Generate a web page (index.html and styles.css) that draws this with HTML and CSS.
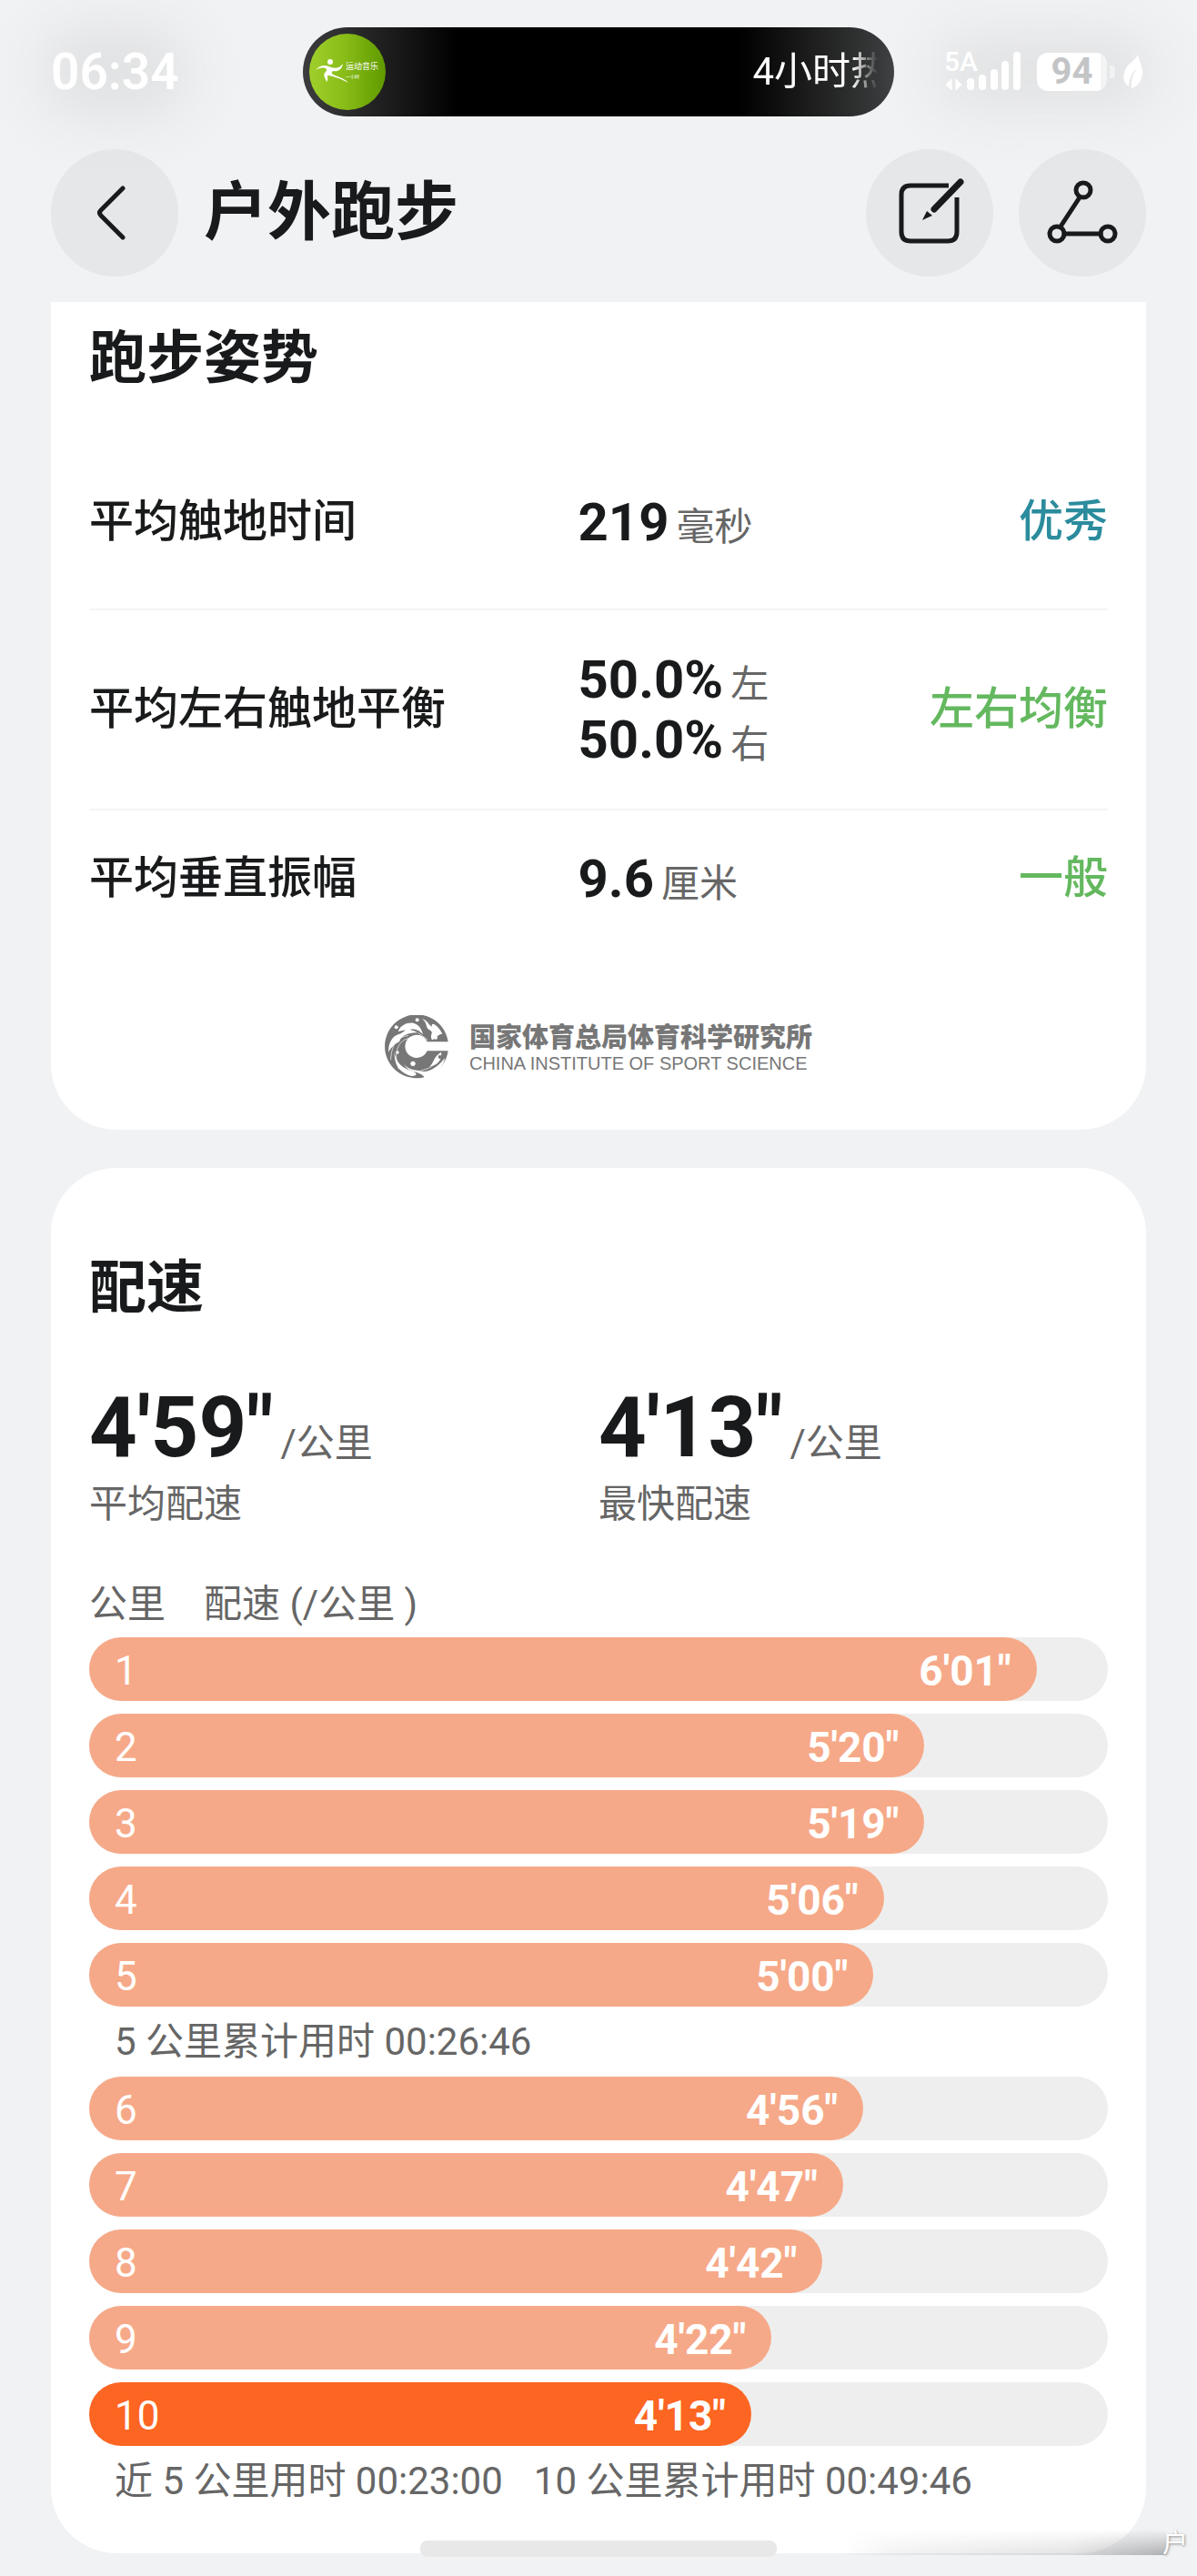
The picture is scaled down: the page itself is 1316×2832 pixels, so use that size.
FILE: index.html
```html
<!DOCTYPE html>
<html lang="zh-CN">
<head>
<meta charset="utf-8">
<meta name="viewport" content="width=device-width, initial-scale=1">
<title>户外跑步</title>
<link rel="stylesheet" href="styles.css">
</head>
<body>
<div class="page">
  <div class="statusbar">
    <time class="clock haze">06:34</time>
    <div class="island">
      <svg class="album" viewBox="0 0 84 84" aria-hidden="true">
        <defs>
          <linearGradient id="leafy" x1="0" x2="1"><stop offset="0" stop-color="#9fcf2b"/><stop offset=".45" stop-color="#8abd18"/><stop offset="1" stop-color="#5f9a00"/></linearGradient>
        </defs>
        <circle cx="42" cy="42" r="42" fill="url(#leafy)"/>
        <circle cx="23" cy="31" r="3" fill="#fff"/>
        <path d="M7 40C12 34 18 34 24 37C30 39 34 37 37 33C36 40 31 42 26 41C20 46 36 46 43 54C34 49 24 46 20 46C20 49 21 51 19 53C18 49 14 45 18 42C22 38 14 35 7 40Z" fill="#fff"/>
        <text x="40" y="39" class="album-name">运动音乐</text>
        <text x="40" y="49" class="album-sub">一小时</text>
      </svg>
      <span class="ticker">4小时热</span>
    </div>
    <div class="indicators haze">
      <div class="network">
        <span class="network-type">5A</span>
        <svg class="signal" viewBox="0 0 84 44" aria-hidden="true">
          <path d="M2 36L8 30V42ZM19 36L13 30V42Z" fill="#fff" stroke="#fff" stroke-linejoin="round"/>
          <rect x="25" y="29" width="8" height="13" rx="4" fill="#fff"/>
          <rect x="38" y="25" width="8" height="17" rx="4" fill="#fff"/>
          <rect x="51" y="19" width="8" height="23" rx="4" fill="#fff"/>
          <rect x="63" y="10" width="8" height="32" rx="4" fill="#fff"/>
          <rect x="76" y="0" width="8" height="42" rx="4" fill="#fff"/>
        </svg>
      </div>
      <span class="battery">94</span>
      <svg class="leaf" viewBox="0 0 22 38" aria-hidden="true">
        <path d="M16 0C17 8 22 13 21 21C20 31 14 36 9 37C8 28 11 21 15 15C9 20 6 27 6 35C-1 31 -1 22 3 15C6 9 13 7 16 0Z" fill="#fff"/>
      </svg>
    </div>
  </div>

  <header class="topbar">
    <button class="round-button" type="button" aria-label="返回">
      <svg viewBox="0 0 140 140"><path d="M79 43L55 67Q52 70 55 73L79 97" class="line"/></svg>
    </button>
    <h1 class="title">户外跑步</h1>
    <button class="round-button" type="button" aria-label="编辑">
      <svg viewBox="0 0 140 140">
        <path d="M91 40H49Q39 40 39 50V91Q39 101 49 101H90Q100 101 100 91V53" class="line edge"/>
        <path d="M75 66L104 36" class="pen"/>
        <path d="M62 78L67 68L73 73Z" fill="#191a1b"/>
      </svg>
    </button>
    <button class="round-button" type="button" aria-label="分享">
      <svg viewBox="0 0 140 140">
        <g class="line">
          <circle cx="71" cy="45" r="8"/><circle cx="42" cy="93" r="8"/><circle cx="98" cy="93" r="8"/>
          <path d="M67 53L46 85M50 93H90"/>
        </g>
      </svg>
    </button>
  </header>

  <main class="content">
    <section class="card form-card">
      <h2 class="heading">跑步姿势</h2>
      <table class="metrics">
        <tbody>
          <tr class="row-tall"><th scope="row">平均触地时间</th><td class="value"><div class="reading"><b>219</b><span class="unit">毫秒</span></div></td><td class="grade grade-best">优秀</td></tr>
          <tr class="row-double"><th scope="row">平均左右触地平衡</th><td class="value"><div class="reading"><b>50.0%</b><span class="unit">左</span></div><div class="reading"><b>50.0%</b><span class="unit">右</span></div></td><td class="grade">左右均衡</td></tr>
          <tr class="row-short"><th scope="row">平均垂直振幅</th><td class="value"><div class="reading"><b>9.6</b><span class="unit">厘米</span></div></td><td class="grade">一般</td></tr>
        </tbody>
      </table>
      <div class="institute">
        <svg class="emblem" viewBox="40 30 210 210" aria-hidden="true">
          <path d="M249 118A105 105 0 1 0 249 148H180A38 38 0 1 1 180 118Z" fill="#777"/>
          <g fill="#fff">
            <path d="M52 152C52 120 66 98 86 93C105 88 112 72 124 67C118 84 135 78 148 88C118 86 98 98 90 112C92 122 74 116 52 152Z"/>
            <path d="M84 84C92 64 112 54 134 56C152 60 162 76 166 94C150 76 140 70 84 84Z"/>
            <path d="M163 42C186 50 182 62 196 68C190 50 216 62 230 92C216 92 208 108 196 112C186 92 206 88 186 78C174 72 182 56 163 42Z"/>
            <path d="M72 150C75 186 98 206 134 216C156 226 136 236 118 228C86 216 70 190 72 150Z"/>
            <path d="M98 176C104 204 124 210 158 214C180 222 212 206 238 172C238 192 204 236 172 236C150 206 112 230 98 176Z"/>
            <path d="M188 200C204 184 200 168 226 152C230 176 216 194 188 200Z"/>
            <circle cx="78" cy="70" r="6"/><circle cx="147" cy="46" r="6"/><circle cx="208" cy="104" r="6"/><circle cx="82" cy="153" r="5"/><circle cx="133" cy="190" r="8"/>
          </g>
          <g fill="none" stroke="#fff" stroke-width="2">
            <path d="M60 178C62 124 84 100 118 98M86 208C66 150 86 112 122 106M150 88L182 112M160 212C190 208 210 190 222 166"/>
          </g>
          <circle cx="222" cy="168" r="6" fill="#777"/>
        </svg>
        <div class="institute-name">
          <div class="institute-cn">国家体育总局体育科学研究所</div>
          <div class="institute-en">CHINA INSTITUTE OF SPORT SCIENCE</div>
        </div>
      </div>
    </section>

    <section class="card pace-card">
      <h2 class="heading">配速</h2>
      <dl class="summary">
        <div><dd class="reading pace-value"><b>4'59"</b><span class="unit">/公里</span></dd><dt>平均配速</dt></div>
        <div><dd class="reading pace-value"><b>4'13"</b><span class="unit">/公里</span></dd><dt>最快配速</dt></div>
      </dl>
      <div class="split-head"><span>公里</span><span>配速 (/公里 )</span></div>
      <ol class="splits">
        <li class="track"><div class="bar" style="width:93%"><span>1</span><b>6'01"</b></div></li>
        <li class="track"><div class="bar" style="width:82%"><span>2</span><b>5'20"</b></div></li>
        <li class="track"><div class="bar" style="width:82%"><span>3</span><b>5'19"</b></div></li>
        <li class="track"><div class="bar" style="width:78%"><span>4</span><b>5'06"</b></div></li>
        <li class="track"><div class="bar" style="width:77%"><span>5</span><b>5'00"</b></div></li>
        <li class="subtotal"><span>5 公里累计用时 00:26:46</span></li>
        <li class="track"><div class="bar" style="width:76%"><span>6</span><b>4'56"</b></div></li>
        <li class="track"><div class="bar" style="width:74%"><span>7</span><b>4'47"</b></div></li>
        <li class="track"><div class="bar" style="width:72%"><span>8</span><b>4'42"</b></div></li>
        <li class="track"><div class="bar" style="width:67%"><span>9</span><b>4'22"</b></div></li>
        <li class="track"><div class="bar bar-fastest" style="width:65%"><span>10</span><b>4'13"</b></div></li>
        <li class="subtotal"><span>近 5 公里用时 00:23:00</span><span>10 公里累计用时 00:49:46</span></li>
      </ol>
    </section>
  </main>

  <div class="home-indicator"></div>
  <div class="floating-label"><span>户</span></div>
</div>
</body>
</html>
```
FILE: styles.css
```css
* { box-sizing: border-box; }

body {
  margin: 0;
  background: #f1f2f4;
  color: #191a1b;
  font-family: Roboto, "Noto Sans CJK SC", sans-serif;
}

h1, h2, dl, dd, ol { margin: 0; padding: 0; }

.page { position: relative; padding-bottom: 24px; overflow: hidden; }

/* status bar */
.statusbar {
  display: grid;
  grid-template-columns: 1fr 650px 1fr;
  align-items: center;
  padding: 30px 56px 36px;
  color: #fff;
}
.haze { position: relative; z-index: 0; }
.haze::before {
  content: "";
  position: absolute;
  inset: -16px -8px;
  z-index: -1;
  border-radius: 40px;
  background: #e0e1e2;
  filter: blur(30px);
}
.clock { justify-self: start; font-size: 55px; line-height: 64px; font-weight: 600; }
.island {
  display: flex;
  align-items: center;
  justify-content: space-between;
  height: 98px;
  padding: 0 6px 0 7px;
  border-radius: 49px;
  background: linear-gradient(90deg, #3c3c3f 0, #1c1c1c 96px, #000 170px, #000 480px, #3e3f40 100%);
}
.album { width: 84px; height: 84px; }
.album-name { font-size: 9px; fill: #fff; }
.album-sub { font-size: 5px; fill: #fff; }
.ticker {
  white-space: nowrap;
  font-size: 42px;
  line-height: 60px;
  mask-image: linear-gradient(90deg, #000 110px, transparent 138px);
}
.indicators { display: flex; align-items: center; justify-self: end; padding-right: 3px; }
.network { position: relative; margin-right: 18px; }
.network-type { position: absolute; left: 0; top: -4px; font-size: 30px; line-height: 30px; font-weight: 500; }
.signal { display: block; width: 84px; height: 44px; }
.battery {
  position: relative;
  width: 77px;
  height: 42px;
  margin-right: 18px;
  border-radius: 12px;
  background: linear-gradient(90deg, #fff 70px, #f3f4f4 70px);
  color: #c3c4c6;
  font-size: 40px;
  line-height: 42px;
  font-weight: 700;
  text-align: center;
}
.battery::after {
  content: "";
  position: absolute;
  left: 80px;
  top: 14px;
  width: 6px;
  height: 14px;
  border-radius: 0 4px 4px 0;
  background: #f1f2f3;
}
.leaf { width: 22px; height: 38px; }

/* title bar */
.topbar { display: flex; align-items: center; gap: 28px; padding: 0 56px; }
.title { flex: 1; font-size: 70px; line-height: 100px; font-weight: 700; }
.round-button {
  width: 140px;
  height: 140px;
  padding: 0;
  border: 0;
  border-radius: 50%;
  background: #e6e7e8;
}
.round-button svg { display: block; width: 100%; }
.line { fill: none; stroke: #191a1b; stroke-width: 5; stroke-linecap: round; stroke-linejoin: round; }
.edge { stroke-linecap: butt; }
.pen { stroke: #191a1b; stroke-width: 7; stroke-linecap: round; }

/* cards */
.content { display: grid; gap: 42px; padding: 28px 56px 0; }
.card { padding: 0 42px; border-radius: 72px; background: #fff; }
.form-card { padding-top: 22px; padding-bottom: 56px; border-radius: 0 0 72px 72px; }
.pace-card { padding-top: 92px; padding-bottom: 55px; }
.heading { font-size: 63px; line-height: 80px; font-weight: 700; }
.reading { display: flex; align-items: baseline; gap: 8px; }
.unit { color: #666; font-size: 42px; line-height: 40px; font-weight: 400; }

.metrics { width: 100%; margin-top: 44px; border-collapse: collapse; table-layout: fixed; }
.metrics th, .metrics td { padding: 0; vertical-align: middle; font-size: 49px; line-height: 66px; font-weight: 500; }
.metrics th { width: 48%; text-align: left; }
.metrics tr + tr { border-top: 2px solid #f4f4f4; }
.metrics .value { width: 22%; white-space: nowrap; }
.value b { font-size: 58px; font-weight: 700; }
.metrics .grade { color: #64b85f; text-align: right; }
.metrics .grade-best { color: #2b8c9d; }
.row-tall { height: 192px; }
.row-double { height: 220px; }
.row-short { height: 150px; }

.institute { display: flex; justify-content: center; align-items: center; gap: 23px; margin-top: 76px; color: #777; }
.emblem { width: 70px; height: 70px; }
.institute-name { padding-top: 4px; }
.institute-cn { font-size: 29px; line-height: 32px; font-weight: 900; }
.institute-en { font-family: "Liberation Sans", Arial, sans-serif; font-size: 20px; line-height: 24px; }

/* pace */
.summary { display: grid; grid-template-columns: 1fr 1fr; margin-top: 64px; color: #666; font-size: 42px; }
.summary > div { display: flex; flex-direction: column; gap: 6px; }
.summary dt { line-height: 56px; }
.pace-value { line-height: 100px; }
.pace-value b { color: #191a1b; font-size: 92px; font-weight: 700; }
.split-head { display: flex; gap: 42px; margin: 54px 0 8px; color: #666; font-size: 42px; line-height: 56px; }
.splits { display: grid; gap: 14px; list-style: none; }
.track { border-radius: 35px; background: #eee; }
.bar {
  display: flex;
  justify-content: space-between;
  padding: 4px 28px 0;
  border-radius: 35px;
  background: #f6a988;
  color: #fff;
  font-size: 44px;
  line-height: 66px;
}
.bar b { font-size: 46px; }
.bar-fastest { background: #fc6522; }
.subtotal { display: flex; gap: 34px; padding: 0 28px; color: #666; font-size: 42px; line-height: 49px; }

/* overlays at the bottom edge */
.home-indicator {
  position: absolute;
  left: 50%;
  bottom: 20px;
  width: 392px;
  height: 18px;
  border-radius: 8px;
  background: #e8e8e8;
  transform: translateX(-50%);
}
.floating-label {
  position: absolute;
  right: 10px;
  bottom: 12px;
  width: 380px;
  color: #fff;
  font-size: 28px;
  line-height: 44px;
  text-align: right;
  text-shadow: 1px 1px 3px #888;
}
.floating-label::before {
  content: "";
  position: absolute;
  left: 0;
  right: 24px;
  top: 6px;
  height: 28px;
  background: linear-gradient(90deg, transparent 0, rgba(150, 150, 150, 0.12) 15%, rgba(150, 150, 150, 0.28) 70%, rgba(130, 130, 130, 0.6) 100%);
  mask-image: linear-gradient(180deg, transparent, #000);
}
.floating-label span { position: relative; }
```
